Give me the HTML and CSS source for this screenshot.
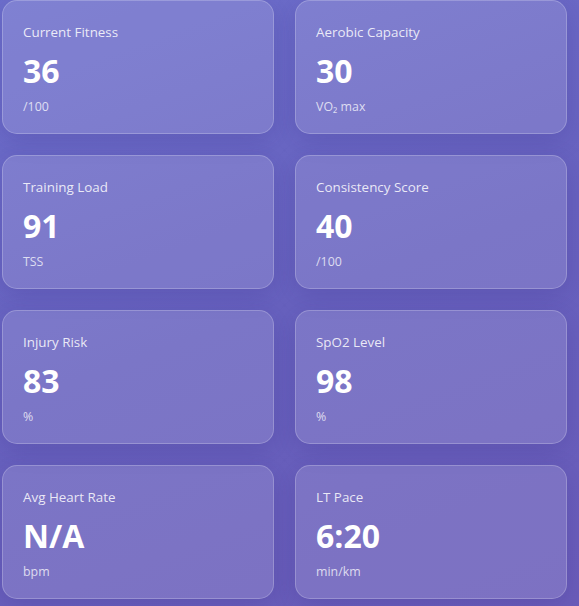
FILE: index.html
```html
<!DOCTYPE html>
<html>
<head>
<meta charset="utf-8">
<link rel="stylesheet" href="styles.css">
</head>
<body>
<div class="grid">
  <div class="card"><div class="label">Current Fitness</div><div class="value">36</div><div class="unit">/100</div></div>
  <div class="card"><div class="label">Aerobic Capacity</div><div class="value">30</div><div class="unit">VO₂ max</div></div>
  <div class="card"><div class="label">Training Load</div><div class="value">91</div><div class="unit">TSS</div></div>
  <div class="card"><div class="label">Consistency Score</div><div class="value">40</div><div class="unit">/100</div></div>
  <div class="card"><div class="label">Injury Risk</div><div class="value">83</div><div class="unit">%</div></div>
  <div class="card"><div class="label">SpO2 Level</div><div class="value">98</div><div class="unit">%</div></div>
  <div class="card"><div class="label">Avg Heart Rate</div><div class="value">N/A</div><div class="unit">bpm</div></div>
  <div class="card"><div class="label">LT Pace</div><div class="value">6:20</div><div class="unit">min/km</div></div>
</div>
</body>
</html>
```
FILE: styles.css
```css
html, body {
  margin: 0;
  height: 100%;
}
body {
  background: linear-gradient(160deg, #6d6fcc 0%, #6862bf 50%, #6a5cb9 100%);
  font-family: "Open Sans", "Noto Sans", sans-serif;
  color: #fff;
  overflow: hidden;
}
.grid {
  display: grid;
  grid-template-columns: 272px 272px;
  grid-auto-rows: 134px;
  column-gap: 21px;
  row-gap: 21px;
  padding: 0 12px 0 2px;
}
.card {
  box-sizing: border-box;
  background: rgba(255, 255, 255, 0.13);
  border: 1px solid rgba(255, 255, 255, 0.22);
  border-radius: 15px;
  padding: 22px 20px 18px 20px;
  box-shadow: 0 6px 24px rgba(40, 30, 120, 0.18);
}
.label {
  font-size: 13.4px;
  line-height: 18px;
  color: rgba(255, 255, 255, 0.85);
}
.value {
  font-size: 32px;
  font-weight: 700;
  line-height: 40px;
  margin: 10px 0 8px;
}
.unit {
  font-size: 12.4px;
  line-height: 16px;
  color: rgba(255, 255, 255, 0.75);
}
```
